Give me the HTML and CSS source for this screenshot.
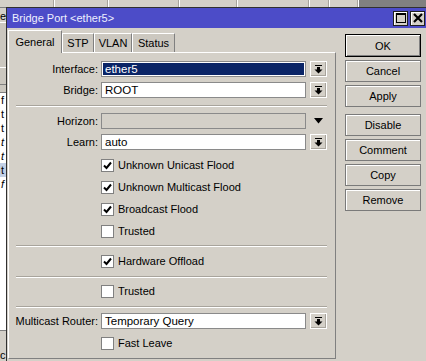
FILE: index.html
```html
<!DOCTYPE html>
<html lang="en">
<head>
  <meta charset="UTF-8">
  <title>Bridge Port &lt;ether5&gt;</title>
  <link rel="stylesheet" href="styles.css">
</head>
<body>

  <div class="desk">
    <div class="bg-head">
      <span class="col c1"></span>
      <span class="col c2"></span>
      <span class="col c3"></span>
      <span class="col c4"></span>
      <span class="col c5"></span>
      <span class="col c6"></span>
      <span class="col c7"></span>
      <span class="col dark"></span>
    </div>
    <div class="bg-side">
      <div class="side-top">e</div>
      <div class="side-tool"><span class="tool-btn"></span></div>
      <ul class="side-list">
        <li>f</li>
        <li>t</li>
        <li>t</li>
        <li class="it">t</li>
        <li class="it">t</li>
        <li class="sel">t</li>
        <li class="it">f</li>
      </ul>
      <div class="side-foot">c</div>
    </div>

    <div class="dialog">
      <div class="titlebar">
        <span class="title">Bridge Port &lt;ether5&gt;</span>
        <div class="tb-btns">
          <span class="tb-btn">
            <svg width="10" height="10" viewBox="0 0 10 10"><rect x="0.5" y="0.5" width="9" height="9" fill="none" stroke="#000"/><rect x="0" y="0" width="10" height="2" fill="#000"/></svg>
          </span>
          <span class="tb-btn">
            <svg width="10" height="10" viewBox="0 0 10 10"><path d="M1 1 L9 9 M9 1 L1 9" stroke="#000" stroke-width="2.2"/></svg>
          </span>
        </div>
      </div>

      <div class="dlg-body">
        <div class="tabs-area">
          <div class="tabs">
            <div class="tab active t-general">General</div>
            <div class="tab t-stp">STP</div>
            <div class="tab t-vlan">VLAN</div>
            <div class="tab t-status">Status</div>
          </div>

          <div class="panel">
            <div class="row">
              <label class="lbl">Interface:</label>
              <div class="field selected">ether5</div>
              <span class="dd-btn"><svg width="9" height="9" viewBox="0 0 9 9"><rect x="1" y="0" width="7" height="1"/><rect x="3" y="2" width="3" height="3"/><polygon points="0.5,4.5 8.5,4.5 4.5,8.5"/></svg></span>
            </div>
            <div class="row">
              <label class="lbl">Bridge:</label>
              <div class="field">ROOT</div>
              <span class="dd-btn"><svg width="9" height="9" viewBox="0 0 9 9"><rect x="1" y="0" width="7" height="1"/><rect x="3" y="2" width="3" height="3"/><polygon points="0.5,4.5 8.5,4.5 4.5,8.5"/></svg></span>
            </div>

            <div class="sep sep-a"></div>

            <div class="row">
              <label class="lbl">Horizon:</label>
              <div class="field disabled"></div>
              <span class="dd-plain"><svg width="9" height="6" viewBox="0 0 9 6"><polygon points="0,0 9,0 4.5,5.5"/></svg></span>
            </div>
            <div class="row">
              <label class="lbl">Learn:</label>
              <div class="field">auto</div>
              <span class="dd-btn"><svg width="9" height="9" viewBox="0 0 9 9"><rect x="1" y="0" width="7" height="1"/><rect x="3" y="2" width="3" height="3"/><polygon points="0.5,4.5 8.5,4.5 4.5,8.5"/></svg></span>
            </div>

            <div class="checks first">
              <div class="check"><span class="box on"><svg width="9" height="9" viewBox="0 0 9 9"><path d="M1 4.5 L3.5 7 L8 1.5" fill="none" stroke="#000" stroke-width="2"/></svg></span>Unknown Unicast Flood</div>
              <div class="check"><span class="box on"><svg width="9" height="9" viewBox="0 0 9 9"><path d="M1 4.5 L3.5 7 L8 1.5" fill="none" stroke="#000" stroke-width="2"/></svg></span>Unknown Multicast Flood</div>
              <div class="check"><span class="box on"><svg width="9" height="9" viewBox="0 0 9 9"><path d="M1 4.5 L3.5 7 L8 1.5" fill="none" stroke="#000" stroke-width="2"/></svg></span>Broadcast Flood</div>
              <div class="check"><span class="box"></span>Trusted</div>
            </div>

            <div class="sep sep-b"></div>

            <div class="checks">
              <div class="check"><span class="box on"><svg width="9" height="9" viewBox="0 0 9 9"><path d="M1 4.5 L3.5 7 L8 1.5" fill="none" stroke="#000" stroke-width="2"/></svg></span>Hardware Offload</div>
            </div>

            <div class="sep sep-c"></div>

            <div class="checks">
              <div class="check"><span class="box"></span>Trusted</div>
            </div>

            <div class="sep sep-d"></div>

            <div class="row">
              <label class="lbl">Multicast Router:</label>
              <div class="field">Temporary Query</div>
              <span class="dd-btn"><svg width="9" height="9" viewBox="0 0 9 9"><rect x="1" y="0" width="7" height="1"/><rect x="3" y="2" width="3" height="3"/><polygon points="0.5,4.5 8.5,4.5 4.5,8.5"/></svg></span>
            </div>

            <div class="checks last">
              <div class="check"><span class="box"></span>Fast Leave</div>
            </div>
          </div>
        </div>

        <div class="buttons">
          <button class="btn default">OK</button>
          <button class="btn">Cancel</button>
          <button class="btn">Apply</button>
          <button class="btn gap">Disable</button>
          <button class="btn">Comment</button>
          <button class="btn">Copy</button>
          <button class="btn">Remove</button>
        </div>
      </div>
    </div>
  </div>

</body>
</html>
```

FILE: styles.css
```css
html, body {
  margin: 0;
  padding: 0;
}

body {
  font-family: "Liberation Sans", Arial, sans-serif;
  font-size: 11px;
  color: #000;
  background-color: #d4d0c8;
  width: 426px;
  height: 361px;
  overflow: hidden;
}

.desk {
  position: relative;
  width: 426px;
  height: 361px;
  overflow: hidden;
}

/* window behind the dialog */
.bg-head {
  display: flex;
  height: 7px;
  border-bottom: 1px solid #808080;
}

.bg-head .col {
  height: 7px;
  border-right: 1px solid #fff;
  box-shadow: inset -1px 0 #a8a49c;
  background-color: #d4d0c8;
}

.c1 { width: 54px; }
.c2 { width: 53px; }
.c3 { width: 70px; }
.c4 { width: 57px; }
.c5 { width: 71px; }
.c6 { width: 19px; }
.c7 { width: 28px; }

.bg-head .dark {
  flex: 1;
  background-color: #808080;
  border: none;
  box-shadow: none;
}

.bg-side {
  width: 6px;
  height: 353px;
  display: flex;
  flex-direction: column;
}

.side-top {
  height: 14px;
  line-height: 16px;
}

.side-tool {
  height: 70px;
  background-color: #cbc7bf;
  border-top: 1px solid #fff;
}

.tool-btn {
  display: block;
  margin-top: 44px;
  height: 16px;
  border-top: 1px solid #fff;
  border-bottom: 1px solid #808080;
}

.side-list {
  list-style: none;
  margin: 0;
  padding: 0;
  height: 240px;
  background-color: #fff;
  border-top: 1px solid #808080;
}

.side-list li {
  height: 14px;
  line-height: 14px;
  padding-left: 1px;
}

.side-list li.it {
  font-style: italic;
}

.side-list li.sel {
  background-color: #c2d0e6;
}

.side-foot {
  flex: 1;
  border-top: 1px solid #808080;
  padding-top: 18px;
  line-height: 12px;
}

/* dialog window */
.dialog {
  position: absolute;
  left: 6px;
  top: 7px;
  width: 419px;
  height: 360px;
  background-color: #d4d0c8;
  border-left: 1px solid #303030;
  border-top: 1px solid #303030;
  border-right: 1px solid #303030;
}

.titlebar {
  height: 20px;
  background-color: #4c4cc8;
  display: flex;
  align-items: center;
  justify-content: space-between;
  padding-left: 5px;
}

.title {
  color: #eef0ff;
  font-size: 11px;
}

.tb-btns {
  display: flex;
  gap: 2px;
  margin-right: 1px;
}

.tb-btn {
  width: 13px;
  height: 13px;
  background-color: #d4d0c8;
  border: 1px solid #202020;
  box-shadow: inset 1px 1px #fff;
  display: flex;
  align-items: center;
  justify-content: center;
}

.dlg-body {
  display: flex;
  padding-left: 1px;
}

.tabs-area {
  width: 328px;
  padding-top: 2px;
}

.tabs {
  display: flex;
  align-items: flex-end;
  height: 22px;
}

.tab {
  height: 19px;
  line-height: 19px;
  text-align: center;
  background-color: #ccc8c0;
  border-top: 1px solid #fff;
  border-left: 1px solid #fff;
  border-right: 1px solid #808080;
  box-sizing: border-box;
}

.tab.active {
  height: 23px;
  line-height: 22px;
  margin-bottom: -1px;
  background-color: #d4d0c8;
  position: relative;
  z-index: 1;
}

.t-general { width: 54px; }
.t-stp { width: 32px; }
.t-vlan { width: 38px; }
.t-status { width: 43px; }

.panel {
  height: 307px;
  border-top: 1px solid #fff;
  border-left: 1px solid #fff;
  border-right: 1px solid #808080;
  border-bottom: 1px solid #808080;
  padding: 8px 8px 0 6px;
  box-sizing: border-box;
}

.row {
  display: flex;
  align-items: center;
  height: 16px;
  margin-bottom: 5px;
}

.lbl {
  width: 83px;
  text-align: right;
  margin-right: 3px;
  white-space: nowrap;
}

.field {
  width: 205px;
  height: 16px;
  box-sizing: border-box;
  border: 1px solid #8a8a8a;
  background-color: #fff;
  padding-left: 3px;
  line-height: 14px;
  font-size: 11.5px;
}

.field.selected {
  background-color: #0a2466;
  color: #fff;
  box-shadow: inset 0 0 0 1px #fff;
}

.field.disabled {
  background-color: #d4d0c8;
}

.dd-btn {
  width: 17px;
  height: 16px;
  margin-left: 4px;
  box-sizing: border-box;
  border: 1px solid #fff;
  box-shadow: inset -1px -1px #a8a49c;
  background-color: #d4d0c8;
  display: flex;
  align-items: center;
  justify-content: center;
}

.dd-plain {
  width: 17px;
  margin-left: 4px;
  display: flex;
  justify-content: center;
}

.sep {
  height: 0;
  border-top: 1px solid #a8a49c;
  border-bottom: 1px solid #fff;
}

.sep-a { margin: 7px 0 6px 1px; }
.sep-b { margin: 3px 0 3px 1px; }
.sep-c { margin: 4px 0 2px 1px; }
.sep-d { margin: 4px 0 5px 1px; }

.checks {
  padding-left: 86px;
}

.checks.first {
  margin-top: -1px;
}

.checks.last {
  margin-top: -2px;
}

.check {
  display: flex;
  align-items: center;
  height: 22px;
}

.box {
  width: 13px;
  height: 13px;
  box-sizing: border-box;
  border: 1px solid #808080;
  background-color: #fff;
  margin-right: 4px;
  display: flex;
  align-items: center;
  justify-content: center;
}

.buttons {
  margin-left: 9px;
  width: 76px;
  padding-top: 6px;
  display: flex;
  flex-direction: column;
  gap: 3px;
}

.btn {
  height: 22px;
  width: 76px;
  font-family: "Liberation Sans", Arial, sans-serif;
  font-size: 11px;
  color: #000;
  background-color: #d4d0c8;
  border: 1px solid #7a7a7a;
  box-shadow: inset 1px 1px #fff;
  padding: 0;
}

.btn.default {
  height: 23px;
  border: 1px solid #000;
  box-shadow: inset 1px 1px #fff, inset -1px -1px #808080;
}

.btn.gap {
  margin-top: 4px;
}
```
